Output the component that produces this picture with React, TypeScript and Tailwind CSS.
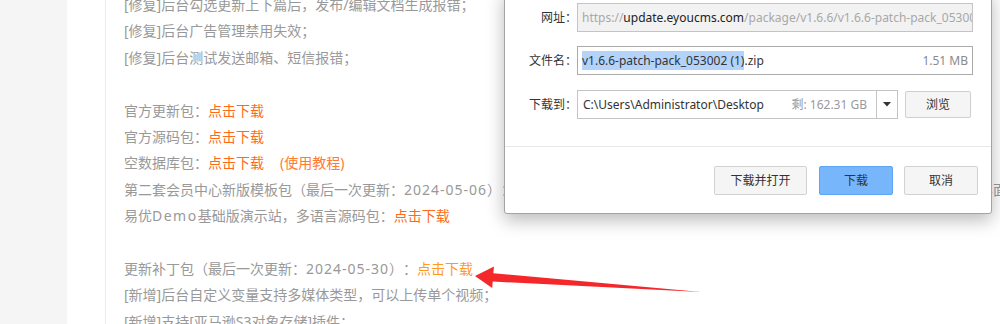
import React from "react";

const pageFont = { fontFamily: '"Noto Sans", "Noto Sans CJK SC", sans-serif' };

function Line({ children, className = "" }: { children?: React.ReactNode; className?: string }) {
  return <div className={`h-[26.4px] leading-[26.4px] whitespace-nowrap ${className}`}>{children}</div>;
}

const O = ({ children }: { children: React.ReactNode }) => <span className="text-[#ff6a1a]">{children}</span>;
const D = ({ children }: { children: React.ReactNode }) => <span className="tracking-[1px]">{children}</span>;

export default function App() {
  return (
    <div
      className="relative w-[1000px] h-[324px] overflow-hidden bg-white flex [text-spacing-trim:space-all]"
      style={pageFont}
    >
      <div className="w-[67px] shrink-0 bg-[#f5f5f5]" />
      <div className="w-[39px] shrink-0 border-r border-[#ececec]" />
      <div className="pl-[18px] mt-[-8px] text-[14px] text-[#999999] flex-1 min-w-0">
        <Line>[修复]后台勾选更新上下篇后，发布/编辑文档生成报错；</Line>
        <Line>[修复]后台广告管理禁用失效；</Line>
        <Line>[修复]后台测试发送邮箱、短信报错；</Line>
        <Line />
        <Line>官方更新包：<O>点击下载</O></Line>
        <Line>官方源码包：<O>点击下载</O></Line>
        <Line>
          空数据库包：<O>点击下载</O>
          <span className="ml-[16px] text-[#ff7a33]">(使用教程)</span>
        </Line>
        <Line>
          第二套会员中心新版模板包（最后一次更新：<D>2024-05-06</D>）：点击下载（WAP端与手机端模板分开，覆盖后可在后台切换新版会员中心的界面
        </Line>
        <Line>
          易优<span className="tracking-[1.5px]">Demo</span>基础版演示站，多语言源码包：<O>点击下载</O>
        </Line>
        <Line />
        <Line>
          更新补丁包（最后一次更新：<D>2024-05-30</D>）：<span className="text-[#ff9a1a]">点击下载</span>
        </Line>
        <Line>[新增]后台自定义变量支持多媒体类型，可以上传单个视频；</Line>
        <Line>[新增]支持[亚马逊S3对象存储]插件；</Line>
      </div>

      {/* Download dialog */}
      <div className="absolute left-[504px] top-[-10px] w-[488px] h-[224px] bg-white border border-[#a3a3a3] rounded-b-[3px] shadow-[0_6px_18px_rgba(0,0,0,0.28)] text-[12px] text-[#333333] flex flex-col">
        <div className="pt-[12px] flex flex-col">
          <div className="flex items-center h-[29px]">
            <div className="w-[72px] text-right">网址：</div>
            <div className="w-[396px] h-[29px] border border-[#c4c4c4] bg-[#f2f2f2] pl-[4px] flex items-center overflow-hidden whitespace-nowrap">
              <span className="text-[#a8a8a8]">https://</span>
              <span className="text-[#222222]">update.eyoucms.com</span>
              <span className="text-[#a8a8a8]">/package/v1.6.6/v1.6.6-patch-pack_053002 (1).zip</span>
            </div>
          </div>
          <div className="flex items-center h-[29px] mt-[14px]">
            <div className="w-[72px] text-right">文件名：</div>
            <div className="w-[396px] h-[29px] border border-[#ababab] bg-white pl-[4px] pr-[4px] flex items-center whitespace-nowrap">
              <span className="bg-[#b3d3fb] leading-[19px]">v1.6.6-patch-pack_053002 (1)</span>
              <span>.zip</span>
              <span className="ml-auto text-[#8a8a8a]">1.51 MB</span>
            </div>
          </div>
          <div className="flex items-center h-[29px] mt-[15px]">
            <div className="w-[72px] text-right">下载到：</div>
            <div className="w-[321px] h-[29px] border border-[#c4c4c4] bg-white flex items-center whitespace-nowrap">
              <span className="pl-[5px]">C:\Users\Administrator\Desktop</span>
              <span className="ml-auto pr-[9px] text-[#9a9a9a]">剩: 162.31 GB</span>
              <div className="w-[21px] h-full border-l border-[#c4c4c4] flex items-center justify-center">
                <svg width="8" height="5" viewBox="0 0 8 5">
                  <polygon points="0,0 8,0 4,4.5" fill="#333" />
                </svg>
              </div>
            </div>
            <div className="ml-[7px] w-[66px] h-[27px] border border-[#cfcfcf] bg-[#f5f5f5] rounded-[2px] flex items-center justify-center">
              浏览
            </div>
          </div>
        </div>
        <div className="mt-[27px] border-t border-[#e8e8e8]" />
        <div className="mt-[19px] flex justify-end pr-[13px]">
          <div className="w-[93px] h-[29px] border border-[#d2d2d2] bg-[#f5f5f5] rounded-[2px] flex items-center justify-center">
            下载并打开
          </div>
          <div className="ml-[12px] w-[74px] h-[29px] border border-[#5ea6f5] bg-[#78b6fc] rounded-[2px] flex items-center justify-center">
            下载
          </div>
          <div className="ml-[11px] w-[74px] h-[29px] border border-[#d2d2d2] bg-[#f5f5f5] rounded-[2px] flex items-center justify-center">
            取消
          </div>
        </div>
      </div>

      {/* Red annotation arrow */}
      <svg className="absolute left-0 top-0 pointer-events-none" width="1000" height="324" viewBox="0 0 1000 324">
        <polygon
          points="475,276 494,266.5 493.3,273.2 701,292 492.7,281.6 492.2,288"
          fill="#f4272b"
        />
      </svg>
    </div>
  );
}
